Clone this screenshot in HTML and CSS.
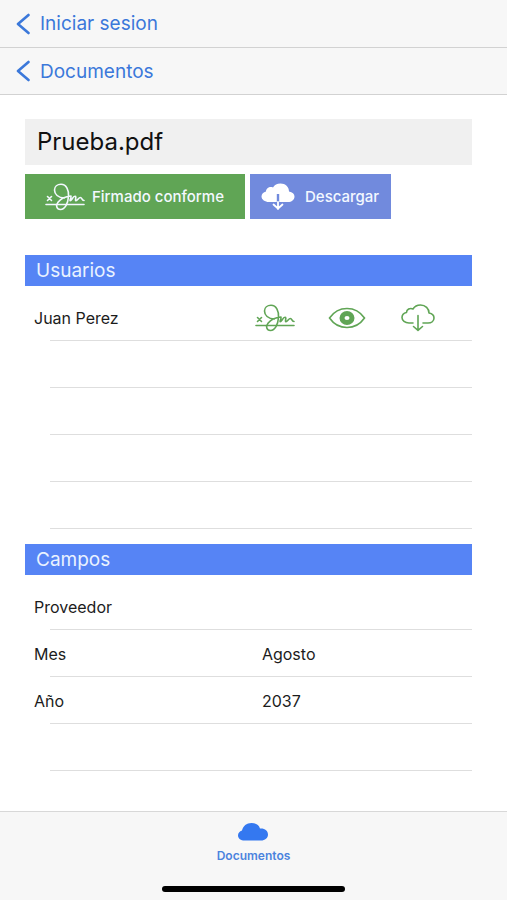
FILE: index.html
```html
<!DOCTYPE html>
<html lang="es">
<head>
<meta charset="utf-8">
<meta name="viewport" content="width=device-width, initial-scale=1">
<title>Prueba.pdf</title>
<link rel="stylesheet" href="styles.css">
</head>
<body>
<svg class="defs" aria-hidden="true">
  <symbol id="back" viewBox="0 0 14 22"><path d="M12.5 2 2 11l10.500 9" fill="none" stroke="currentColor" stroke-width="2.6" stroke-linecap="round" stroke-linejoin="round"/></symbol>
  <symbol id="signature" viewBox="0 0 40 28">
    <g fill="none" stroke="currentColor" stroke-width="1.6" stroke-linecap="round" stroke-linejoin="round">
      <path d="M2.500 13.500l4 4M6.500 13.500l-4 4M1 21.500h38"/>
      <path d="M19.500 15C13 15 9.500 11 9.500 7c0-3.500 3-5.700 6.500-5.700 5.500 0 8 6 7.500 12.200-.5 7-3.500 13-8 13-4 0-5-4-2.500-7.200C15.500 16 20 13.500 26 13c.5 1.500-1.500 4.500-.8 4.700 1.300.3 2.600-4.400 4.800-4.400 2 0-.5 4.400 1 4.400s2.500-3.200 4.500-3.200c1.500 0 1 3 3.500 3"/>
    </g>
  </symbol>
  <symbol id="eye" viewBox="0 0 38 22">
    <path d="M1.500 11C6 4.500 12 1.500 19 1.500S32 4.500 36.500 11C32 17.500 26 20.500 19 20.500S6 17.500 1.500 11Z" fill="none" stroke="currentColor" stroke-width="1.600"/>
    <ellipse cx="19" cy="11" rx="5" ry="4.500" fill="none" stroke="currentColor" stroke-width="5"/>
  </symbol>
  <symbol id="cloud-down" viewBox="0 0 34 28">
    <g fill="none" stroke="currentColor" stroke-width="1.600" stroke-linecap="round" stroke-linejoin="round">
      <path d="M12 19H8c-4 0-7-2.500-7-5.500C1 11 3 9 5.500 8.500 5.500 5.500 9 3.500 12 5c1.500-2.500 4-4 7.500-4 5 0 8.500 3.500 8.500 8 3 .5 5 2.500 5 5 0 3-2.500 5-6 5h-5"/>
      <path d="M17 11.500V26M12.500 22.500 17 26.300l4.500-3.800"/>
    </g>
  </symbol>
  <symbol id="cloud-down-fill" viewBox="0 0 34 28">
    <path d="M15.800 19H8c-4 0-7.500-2.500-7.500-5.500C.5 11 2.500 9 5 8.500 5 5 9 3 12 4.500 13.500 2 16 .5 19.500.5c5 0 8.500 3.500 8.500 8 3.500.5 5.500 2.500 5.500 5 0 3.500-3 5.500-6.500 5.500h-8.800v-8h-2.400Z" fill="currentColor"/>
    <path d="M17 19v7M12.500 21.500 17 25.500l4.500-4" fill="none" stroke="currentColor" stroke-width="1.800" stroke-linecap="round" stroke-linejoin="round"/>
  </symbol>
  <symbol id="cloud" viewBox="0 0 30 18"><path d="M6.500 17.500C3 17.500 0 15.500 0 12.500 0 10 1.500 8.500 4 7.500 5 3 8.500 0 13.500 0c4.500 0 7.500 2 8.500 5.500 4.500-.5 8 2 8 6 0 3.500-3 6-7 6Z" fill="currentColor"/></symbol>
</svg>

<nav class="crumb"><a href="#login"><svg class="icon-back"><use href="#back"/></svg>Iniciar sesion</a></nav>
<nav class="crumb"><a href="#documents"><svg class="icon-back"><use href="#back"/></svg>Documentos</a></nav>

<main>
  <h1>Prueba.pdf</h1>
  <div class="actions">
    <button class="action signed" type="button"><svg class="icon-sign"><use href="#signature"/></svg>Firmado conforme</button>
    <button class="action download" type="button"><svg class="icon-cloud"><use href="#cloud-down-fill"/></svg>Descargar</button>
  </div>

  <h2 id="users">Usuarios</h2>
  <table class="users" aria-labelledby="users">
    <tbody>
      <tr>
        <th scope="row">Juan Perez</th>
        <td><button type="button" aria-label="Firma"><svg class="icon-sign"><use href="#signature"/></svg></button></td>
        <td><button type="button" aria-label="Ver"><svg class="icon-eye"><use href="#eye"/></svg></button></td>
        <td><button type="button" aria-label="Descargar"><svg class="icon-cloud"><use href="#cloud-down"/></svg></button></td>
        <td></td>
      </tr>
      <tr><td colspan="5"></td></tr>
      <tr><td colspan="5"></td></tr>
      <tr><td colspan="5"></td></tr>
      <tr><td colspan="5"></td></tr>
    </tbody>
  </table>

  <h2 id="fields">Campos</h2>
  <table class="fields" aria-labelledby="fields">
    <tbody>
      <tr><th scope="row">Proveedor</th><td></td></tr>
      <tr><th scope="row">Mes</th><td>Agosto</td></tr>
      <tr><th scope="row">Año</th><td>2037</td></tr>
      <tr><td colspan="2"></td></tr>
    </tbody>
  </table>
</main>

<footer>
  <a class="tab" href="#documents"><svg class="icon-tab"><use href="#cloud"/></svg>Documentos</a>
  <div class="home-bar"></div>
</footer>
</body>
</html>
```
FILE: styles.css
```css
* { box-sizing: border-box; }

body {
  margin: 0;
  min-height: 100vh;
  display: flex;
  flex-direction: column;
  background: #fff;
  color: #1c1c1c;
  font-family: Inter, "Liberation Sans", sans-serif;
  font-size: 16px;
}

.defs { position: absolute; width: 0; height: 0; }
svg { display: block; flex: none; }
button { border: 0; padding: 0; font: inherit; background: none; color: inherit; }
a { color: #3b78da; text-decoration: none; }

.crumb {
  display: flex;
  align-items: center;
  height: 47px;
  padding: 0 16px;
  background: #f7f7f7;
  border-bottom: 1px solid #d2d2d2;
  font-size: 19px;
}
.crumb:first-of-type { height: 48px; }
.crumb a { display: flex; align-items: center; gap: 10px; }
.icon-back { width: 14px; height: 22px; }

main { flex: 1; padding: 24px 35px 24px 25px; }

h1 {
  margin: 0 0 9px;
  padding: 0 12px;
  background: #f0f0f0;
  color: #111;
  font-size: 24px;
  font-weight: 400;
  line-height: 46px;
}

.actions { display: flex; gap: 5px; margin-bottom: 36px; }
.action {
  display: flex;
  align-items: center;
  height: 45px;
  color: #f3f8ff;
  font-size: 15px;
  font-weight: 500;
}
.signed { gap: 7px; padding: 0 21px 0 20px; background: #60a555; }
.download { gap: 10px; padding: 0 12px 0 11px; background: #718add; }

h2 {
  margin: 0;
  padding: 0 11px;
  background: #5684f5;
  color: #e9f2ff;
  font-size: 19px;
  font-weight: 400;
  line-height: 31px;
}

table { width: 100%; border-collapse: collapse; table-layout: fixed; }
.users { margin-bottom: 15px; }
tr {
  height: 47px;
  background: linear-gradient(#dedede, #dedede) right bottom / calc(100% - 25px) 1px no-repeat;
}
tr:first-child { height: 55px; }
th, td { padding: 0; text-align: left; font-weight: 400; }
tr:first-child > * { padding-top: 9px; }
th { padding-left: 9px; }
.users th { width: 48%; }
.users tr:first-child td { width: 16%; }
.users tr:first-child td:last-child { width: 4%; }
.users button { display: block; margin: 0 auto; color: #60a555; }
.fields th { width: 53%; }

.icon-sign { width: 40px; height: 28px; }
.icon-eye { width: 38px; height: 22px; }
.icon-cloud { width: 34px; height: 28px; }
.download svg { color: #fff; }

footer {
  display: flex;
  flex-direction: column;
  align-items: center;
  justify-content: space-between;
  height: 89px;
  padding: 11px 0 8px;
  background: #f7f7f7;
  border-top: 1px solid #d8d8d8;
}
.tab {
  display: flex;
  flex-direction: column;
  align-items: center;
  gap: 7px;
  color: #4b83de;
  font-size: 12px;
  font-weight: 600;
  line-height: 16px;
}
.icon-tab { width: 30px; height: 18px; color: #3478f0; }
.home-bar { width: 36%; height: 6px; border-radius: 3px; background: #000; }
```
